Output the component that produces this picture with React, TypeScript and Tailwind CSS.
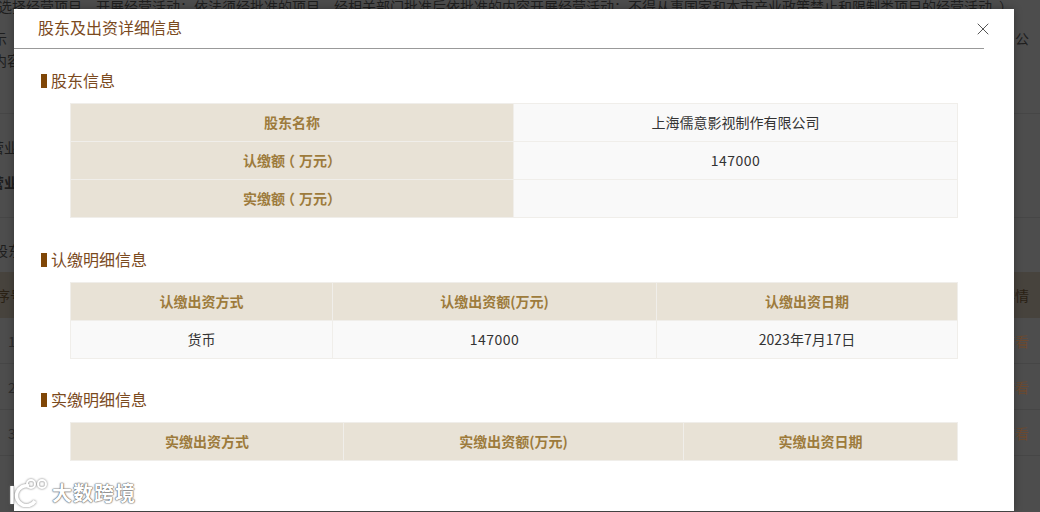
import { X } from 'lucide-react';

const font = { fontFamily: '"Noto Sans CJK SC", "Liberation Sans", sans-serif' };

const cellBase = 'border border-[#f0eeea] h-[38px] p-0 pb-[2px] text-center text-[14px] leading-[20px]';
const headCell = `${cellBase} bg-[#e8e2d6] text-[#9d7b3c] font-bold`;
const bodyCell = `${cellBase} bg-[#f9f9f9] text-[#333333]`;

function SectionTitle({ children }: { children: React.ReactNode }) {
  return (
    <div className="flex items-center h-[22px] pl-[27px]">
      <span className="w-[6px] h-[14px] bg-[#7f4606]" />
      <span className="ml-[4px] -mt-[2px] text-[16px] text-[#7b4a1e] leading-[22px]">{children}</span>
    </div>
  );
}

// full-width brackets keep their whole box, as in the reference
function AmountLabel({ prefix }: { prefix: string }) {
  return (
    <>
      {prefix}
      <span className="inline-block w-[14px] -translate-x-[4px]">（</span>
      万元
      <span className="inline-block w-[14px] text-left">）</span>
    </>
  );
}

function DetailTable({
  widths,
  heads,
  rows,
}: {
  widths: number[];
  heads: string[];
  rows: React.ReactNode[][];
}) {
  return (
    <table className="mt-[11px] ml-[56px] w-[887px] border-collapse table-fixed">
      <colgroup>
        {widths.map((w, i) => (
          <col key={i} style={{ width: w }} />
        ))}
      </colgroup>
      <thead>
        <tr>
          {heads.map((h) => (
            <th key={h} className={headCell}>
              {h}
            </th>
          ))}
        </tr>
      </thead>
      <tbody>
        {rows.map((row, i) => (
          <tr key={i}>
            {row.map((c, j) => (
              <td key={j} className={bodyCell}>
                {c}
              </td>
            ))}
          </tr>
        ))}
      </tbody>
    </table>
  );
}

function BackgroundPage() {
  return (
    <div className="h-[512px] overflow-hidden bg-[#4d4d4d] text-[14px] text-[#1e1e1e] leading-[20px]">
      <div className="-mt-[4px] -ml-[2px] whitespace-nowrap">
        选择经营项目，开展经营活动；依法须经批准的项目，经相关部门批准后依批准的内容开展经营活动；不得从事国家和本市产业政策禁止和限制类项目的经营活动。）
      </div>
      <div className="mt-[12px] -ml-[7px] flex justify-between pr-[11px]">
        <span>示</span>
        <span>公</span>
      </div>
      <div className="mt-[2px] -ml-[7px]">内容</div>
      <div className="mt-[43px] border-t border-[#464646]" />
      <div className="mt-[23px] -ml-[10px]">营业</div>
      <div className="mt-[15px] -ml-[10px] font-bold">营业</div>
      <div className="mt-[25px] border-t border-[#464646]" />
      <div className="mt-[22px] -ml-[6px]">股东</div>
      <div className="mt-[12px] h-[46px] bg-[#47433d] flex items-center justify-between pr-[11px] text-[#2a2115]">
        <span className="-ml-[4px]">序号</span>
        <span>详情</span>
      </div>
      {['1', '2', '3'].map((n) => (
        <div key={n} className="h-[46px] border-b border-[#464646] flex items-center justify-between pl-[8px] pr-[11px]">
          <span className="text-[#2e2e2e]">{n}</span>
          <span className="text-[#6b4a30]">查看</span>
        </div>
      ))}
    </div>
  );
}

function Watermark() {
  return (
    <div className="absolute left-[10px] top-[479px] flex items-center pointer-events-none">
      <svg width="40" height="28" viewBox="0 0 40 28" fill="none" className="drop-shadow-[0_0_1px_#777777]">
        <path d="M2 7v18" stroke="#ffffff" strokeWidth="3.5" />
        <path d="M19 7a10 10 0 1 0 6 15" stroke="#ffffff" strokeWidth="3.5" />
        <circle cx="21" cy="5" r="4" stroke="#ffffff" strokeWidth="2" />
        <circle cx="32" cy="5" r="4" stroke="#ffffff" strokeWidth="2" />
      </svg>
      <span className="ml-[2px] text-[20px] leading-[28px] tracking-[1px] font-bold text-white [text-shadow:0_0_2px_#666,0_0_1px_#666,0_0_1px_#666]">
        大数跨境
      </span>
    </div>
  );
}

export default function App() {
  return (
    <div className="relative w-[1040px] h-[512px] overflow-hidden" style={font}>
      <BackgroundPage />

      {/* Modal */}
      <div className="absolute left-[14px] top-[9px] w-[1000px] h-[502px] bg-white shadow-[0_0_8px_rgba(0,0,0,0.3)]">
        <div className="flex items-center justify-between h-[40px] w-[970px] pl-[24px] border-b border-[#999999]">
          <span className="-mt-[4px] text-[16px] leading-[22px] text-[#7b4a1e]">股东及出资详细信息</span>
          <X size={20} strokeWidth={1.2} className="text-[#555555] -mr-[9px]" />
        </div>

        <div className="pt-[21px]">
          <SectionTitle>股东信息</SectionTitle>
          <table className="mt-[11px] ml-[56px] w-[887px] border-collapse table-fixed">
            <colgroup>
              <col style={{ width: 443 }} />
              <col style={{ width: 444 }} />
            </colgroup>
            <tbody>
              <tr>
                <th className={headCell}>股东名称</th>
                <td className={bodyCell}>上海儒意影视制作有限公司</td>
              </tr>
              <tr>
                <th className={headCell}>
                  <AmountLabel prefix="认缴额" />
                </th>
                <td className={bodyCell}>
                  <span className="tracking-[0.5px]">147000</span>
                </td>
              </tr>
              <tr>
                <th className={headCell}>
                  <AmountLabel prefix="实缴额" />
                </th>
                <td className={bodyCell}></td>
              </tr>
            </tbody>
          </table>
        </div>

        <div className="pt-[31px]">
          <SectionTitle>认缴明细信息</SectionTitle>
          <DetailTable
            widths={[262, 324, 301]}
            heads={['认缴出资方式', '认缴出资额(万元)', '认缴出资日期']}
            rows={[['货币', <span className="tracking-[0.5px]">147000</span>, '2023年7月17日']]}
          />
        </div>

        <div className="pt-[30px]">
          <SectionTitle>实缴明细信息</SectionTitle>
          <DetailTable
            widths={[273, 340, 274]}
            heads={['实缴出资方式', '实缴出资额(万元)', '实缴出资日期']}
            rows={[]}
          />
        </div>
      </div>

      <Watermark />
    </div>
  );
}
